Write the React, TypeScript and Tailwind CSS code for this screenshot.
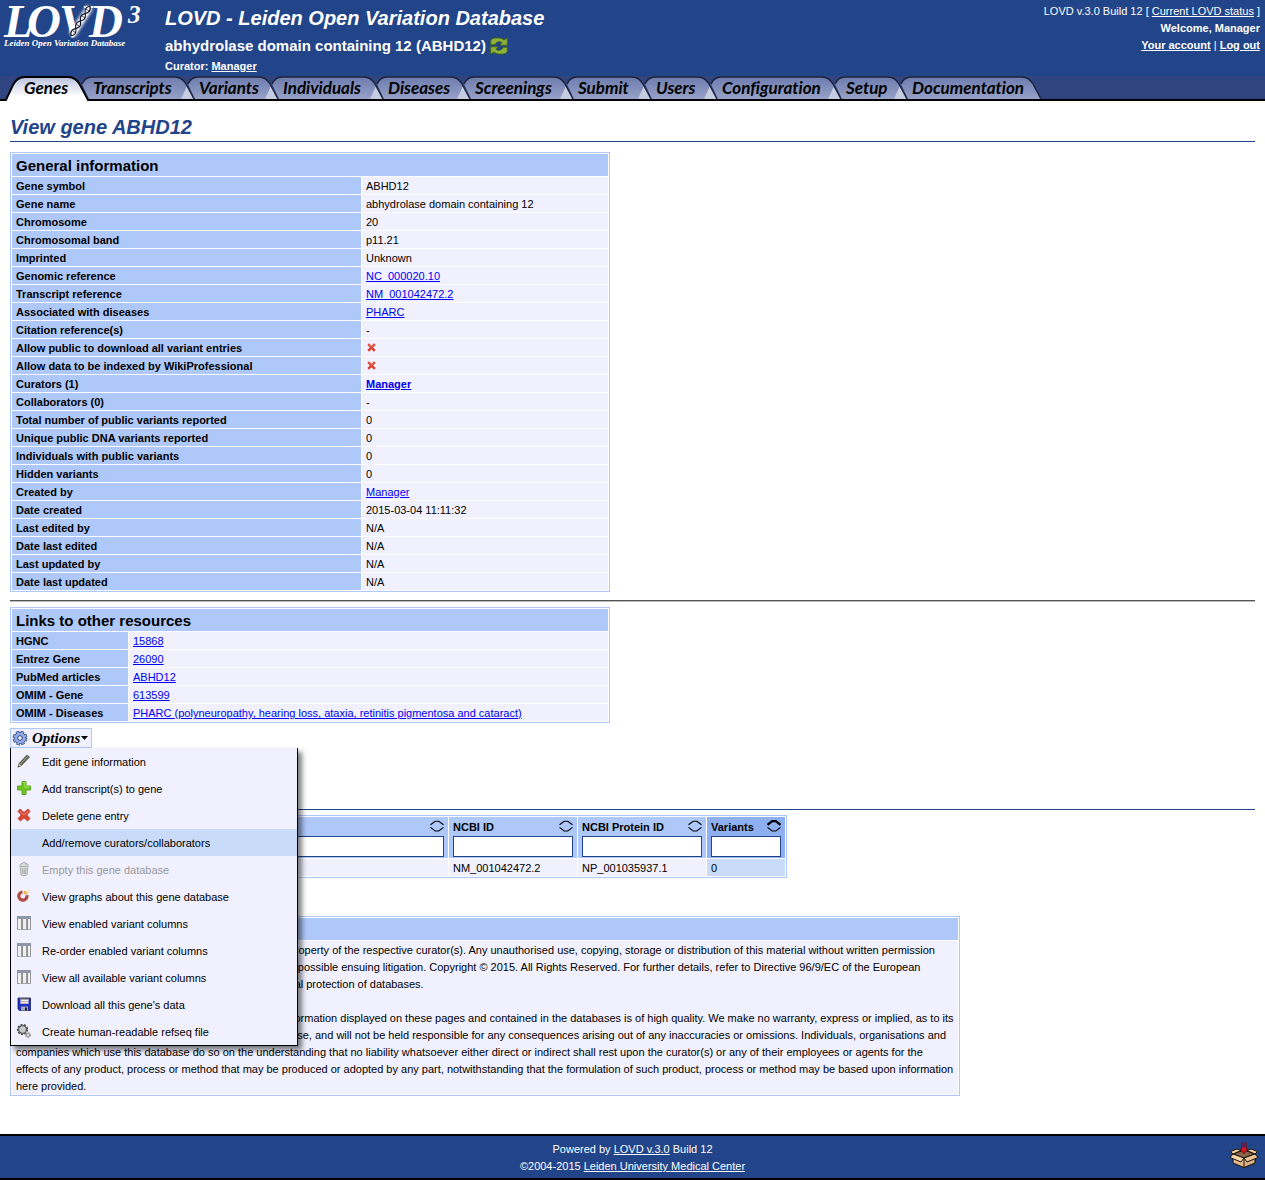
import React from "react";

type Row = { label: string; value: React.ReactNode };

const Link = ({ children, bold }: { children: React.ReactNode; bold?: boolean }) => (
  <a href="#" className={bold ? "font-bold text-[#0000ee] underline" : "text-[#0000ee] underline"}>
    {children}
  </a>
);

const HeaderLink = ({ children }: { children: React.ReactNode }) => (
  <a href="#" className="text-white underline">
    {children}
  </a>
);

const Cross = () => (
  <svg viewBox="0 0 9 9" className="mb-0.5 ml-px block size-[9px]" role="img" aria-label="No">
    <path d="M1.2 1.2 7.8 7.8M7.8 1.2 1.2 7.8" stroke="#d8402c" strokeWidth="2.4" />
    <path d="M1.6 1.2 4.5 4 7.4 1.2" stroke="#ea8078" strokeWidth="1" fill="none" />
  </svg>
);

const general: Row[] = [
  { label: "Gene symbol", value: "ABHD12" },
  { label: "Gene name", value: "abhydrolase domain containing 12" },
  { label: "Chromosome", value: "20" },
  { label: "Chromosomal band", value: "p11.21" },
  { label: "Imprinted", value: "Unknown" },
  { label: "Genomic reference", value: <Link>NC_000020.10</Link> },
  { label: "Transcript reference", value: <Link>NM_001042472.2</Link> },
  { label: "Associated with diseases", value: <Link>PHARC</Link> },
  { label: "Citation reference(s)", value: "-" },
  { label: "Allow public to download all variant entries", value: <Cross /> },
  { label: "Allow data to be indexed by WikiProfessional", value: <Cross /> },
  { label: "Curators (1)", value: <Link bold>Manager</Link> },
  { label: "Collaborators (0)", value: "-" },
  { label: "Total number of public variants reported", value: "0" },
  { label: "Unique public DNA variants reported", value: "0" },
  { label: "Individuals with public variants", value: "0" },
  { label: "Hidden variants", value: "0" },
  { label: "Created by", value: <Link>Manager</Link> },
  { label: "Date created", value: "2015-03-04 11:11:32" },
  { label: "Last edited by", value: "N/A" },
  { label: "Date last edited", value: "N/A" },
  { label: "Last updated by", value: "N/A" },
  { label: "Date last updated", value: "N/A" },
];

const resources: Row[] = [
  { label: "HGNC", value: <Link>15868</Link> },
  { label: "Entrez Gene", value: <Link>26090</Link> },
  { label: "PubMed articles", value: <Link>ABHD12</Link> },
  { label: "OMIM - Gene", value: <Link>613599</Link> },
  {
    label: "OMIM - Diseases",
    value: <Link>PHARC (polyneuropathy, hearing loss, ataxia, retinitis pigmentosa and cataract)</Link>,
  },
];

function InfoTable({ title, rows, labelWidth }: { title: string; rows: Row[]; labelWidth: string }) {
  return (
    <table className="w-[600px] max-w-full border-separate border-spacing-px border border-[#afc8fa]">
      <thead>
        <tr>
          <th colSpan={2} className="bg-[#afc8fa] px-1 pt-0.5 pb-0 text-left text-[15px] leading-5 font-bold">
            {title}
          </th>
        </tr>
      </thead>
      <tbody className="leading-[15px]">
        {rows.map((r) => (
          <tr key={r.label}>
            <th scope="row" className={"bg-[#afc8fa] px-1 pt-0.5 pb-0 text-left font-bold " + labelWidth}>
              {r.label}
            </th>
            <td className="bg-[#f0f0ff] px-1 pt-0.5 pb-0">{r.value}</td>
          </tr>
        ))}
      </tbody>
    </table>
  );
}

const tabs = [
  { name: "Transcripts", w: 106, cls: "w-[106px]" },
  { name: "Variants", w: 84, cls: "w-[84px]" },
  { name: "Individuals", w: 105, cls: "w-[105px]" },
  { name: "Diseases", w: 87, cls: "w-[87px]" },
  { name: "Screenings", w: 103, cls: "w-[103px]" },
  { name: "Submit", w: 78, cls: "w-[78px]" },
  { name: "Users", w: 66, cls: "w-[66px]" },
  { name: "Configuration", w: 124, cls: "w-[124px]" },
  { name: "Setup", w: 66, cls: "w-[66px]" },
  { name: "Documentation", w: 134, cls: "w-[134px]" },
];

function TabBar() {
  return (
    <nav className="flex h-[25px] border-b-2 border-black bg-[#304480] font-[Lato,sans-serif] text-[17px] leading-6 font-bold italic [font-variant-ligatures:none]">
      <a href="#" className="relative z-10 block w-[88px] pl-6 text-black">
        <svg className="absolute top-0 left-0 h-[25px] w-[90px] overflow-visible" viewBox="0 0 90 25" aria-hidden="true">
          <defs>
            <linearGradient id="activeTab" x1="0" y1="0" x2="0" y2="1">
              <stop offset="0" stopColor="#b9c0dd" />
              <stop offset="0.8" stopColor="#ffffff" />
            </linearGradient>
          </defs>
          <path d="M6 25 13 9Q17 1 25 1H68Q76 1 80 9L88 25Z" fill="url(#activeTab)" />
          <path d="M0 24H6L13 9Q17 1 25 1H68Q76 1 80 9L88 24H90" fill="none" stroke="#000" strokeWidth="1.8" />
        </svg>
        <span className="relative">Genes</span>
      </a>
      {tabs.map((t, i) => {
        const outline = `M-6 8Q-3 1 4 1H${t.w - 19}Q${t.w - 12} 1 ${t.w - 8} 8L${t.w} 23`;
        return (
          <a href="#" key={t.name} className={"relative block pl-[5px] text-black " + t.cls}>
            <svg
              className={"absolute top-0 left-0 h-[23px] overflow-visible " + t.cls}
              viewBox={`0 0 ${t.w} 23`}
              aria-hidden="true"
            >
              <defs>
                <linearGradient id="idleTab" x1="0" y1="0" x2="0" y2="1">
                  <stop offset="0" stopColor="#6d7cae" />
                  <stop offset="1" stopColor="#97a1c8" />
                </linearGradient>
              </defs>
              <path d={outline + "H1L-6 8Z"} fill="url(#idleTab)" />
              {i < tabs.length - 1 && <path d={`M${t.w - 13} 23 ${t.w - 7} 10 ${t.w} 23Z`} fill="#c6cce1" />}
              <path d={outline} fill="none" stroke="#1c2238" strokeWidth="1.4" />
            </svg>
            <span className="relative">{t.name}</span>
          </a>
        );
      })}
    </nav>
  );
}

/* Sine strand winding round the axis from (90,6) to (71,36). */
function strand(phase: number) {
  const points: string[] = [];
  for (let i = 0; i <= 40; i++) {
    const t = i / 40;
    const off = 2.2 * Math.sin(t * Math.PI * 4 + phase);
    points.push(`${(90 - 19 * t + off * 0.85).toFixed(1)},${(6 + 30 * t + off * 0.53).toFixed(1)}`);
  }
  return points.join(" ");
}

const Logo = () => (
  <svg viewBox="0 0 150 50" className="h-[50px] w-[150px] overflow-visible" role="img" aria-label="LOVD 3">
    <defs>
      <filter id="glow" x="-50%" y="-50%" width="200%" height="200%">
        <feGaussianBlur stdDeviation="1.5" />
      </filter>
    </defs>
    <g fill="#fff" fontFamily="'Liberation Serif', serif" fontStyle="italic" fontWeight="700" fontSize="47">
      <text x="4" y="37">L</text>
      <text x="27" y="37">O</text>
      <text x="59" y="37">V</text>
      <text x="89" y="37">D</text>
    </g>
    <path d="M90 7 72 35" stroke="#fff" strokeWidth="7" filter="url(#glow)" />
    <g fill="none" stroke="#10182c">
      <polyline points={strand(0)} strokeWidth="1.3" />
      <polyline points={strand(Math.PI)} strokeWidth="1.1" />
      <path d="M86 9l3 2M82 16l3 2M76 24l3 2M73 31l3 2" strokeWidth="0.8" />
    </g>
    <g fill="#fff" fontFamily="'Liberation Serif', serif" fontStyle="italic" fontWeight="700">
      <text x="128" y="23" fontSize="25">3</text>
      <text x="4" y="46" fontSize="9">Leiden Open Variation Database</text>
    </g>
  </svg>
);

const Refresh = () => (
  <svg viewBox="0 0 18 18" className="size-[18px]" role="img" aria-label="Switch gene">
    <g fill="#8fb03c" stroke="#3f6414" strokeWidth="0.9">
      <path d="M.7 7.800V3.500Q2 1 5 1H9.500Q12 1 14 3L17.300.8V8.200H9.800L12 5.600C9.500 3.800 6.500 4.500 4.800 7.800Z" />
      <path d="M17.300 10.200V14.500Q16 17 13 17H8.500Q6 17 4 15L.7 17.200V9.800H8.200L6 12.400C8.500 14.200 11.500 13.500 13.200 10.200Z" />
    </g>
  </svg>
);

const Gear = () => (
  <svg viewBox="0 0 16 16" className="size-4" aria-hidden="true">
    <circle cx="8" cy="8" r="6.200" fill="none" stroke="#33456f" strokeWidth="2.400" strokeDasharray="3.300 1.570" />
    <circle cx="8" cy="8" r="5.800" fill="#8faae8" stroke="#33456f" strokeWidth="0.8" />
    <circle cx="8" cy="8" r="6" fill="none" stroke="#8faae8" strokeWidth="1.500" strokeDasharray="2.100 2.612" strokeDashoffset="-0.600" />
    <circle cx="8" cy="8" r="2.300" fill="#f0f0ff" stroke="#33456f" strokeWidth="1" />
  </svg>
);

const PencilIcon = () => (
  <g>
    <path d="M2 14 3 10.500 11 2 13.500 4 5.500 12.500Z" fill="#5e6b57" stroke="#474c41" strokeWidth="0.7" />
    <path d="M4.500 11 12 3" stroke="#9aa58c" strokeWidth="1" />
    <path d="M2 14 3 10.500 5.500 12.500Z" fill="#c8b79c" />
    <path d="M1.800 14.200 2.500 12.400 3.600 13.400Z" fill="#333" />
  </g>
);
const PlusIcon = () => (
  <g>
    <path d="M6 1.500h4V6h4.500v4H10v4.500H6V10H1.500V6H6Z" fill="#6fc520" stroke="#5ba51c" strokeWidth="1" />
    <path d="M7 2.500h2V7h4.500" stroke="#a8e565" strokeWidth="1" fill="none" />
  </g>
);
const DeleteIcon = () => (
  <g>
    <path
      d="M4 2 8 5.500 12 2 14 4.500 10.800 8 14 11.500 11.500 14 8 10.800 4.500 14 2 11.500 5.200 8 2 4.500Z"
      fill="#dc4634"
      stroke="#b83322"
      strokeWidth="0.8"
    />
    <path d="M3.500 4.200 8 7.800 12.500 4.200" stroke="#f08a7e" strokeWidth="1" fill="none" />
  </g>
);
const BinIcon = () => (
  <g stroke="#a5a5a5" strokeWidth="0.9" fill="#dedede">
    <path d="M4 4.500 5 14Q8 15.500 11 14L12 4.500Z" />
    <ellipse cx="8" cy="4" rx="4.200" ry="1.600" />
    <path d="M6.300 7 6.800 13M8.200 7V13M10 7 9.500 13" />
    <path d="M6 3 7 1.500 9.500 1.800 10 3.500" />
  </g>
);
const GraphIcon = () => (
  <g fill="none">
    <path d="M10.900 7.200A4.100 4.100 0 1 1 6.500 4" stroke="#b14a42" strokeWidth="3.200" />
    <path d="M7.800 3.900A4.200 4.200 0 0 1 10.400 6" stroke="#e6b93c" strokeWidth="2.800" />
    <path d="M11 2 14.500 2.500M11 4 14 4.500" stroke="#eee2bb" strokeWidth="1" />
  </g>
);
const ColumnsIcon = () => (
  <g>
    <path d="M1 1H15V15H1Z" fill="#f0f0f4" />
    <path d="M1.500 3V15M5.500 3V15M10.500 3V15M14.500 3V15" stroke="#9a9a9a" strokeWidth="1" />
    <path d="M6.500 4V15M11.500 4V15" stroke="#77776f" strokeWidth="0.8" />
    <path d="M1 1H15V4H1Z" fill="#9096aa" />
    <path d="M1.500 14.500H4.500M7 14.500H10M12 14.500H15" stroke="#aaa" strokeWidth="1" />
  </g>
);
const DiskIcon = () => (
  <g>
    <path d="M2 2H14.500V14.500H3.500L2 13Z" fill="#2330c4" stroke="#151b62" strokeWidth="0.8" />
    <path d="M4.500 2H12.500V8H4.500Z" fill="#f3efef" />
    <path d="M4.500 2H12.500V3.500H4.500Z" fill="#555" />
    <path d="M5 5.500H12M5 7.500H12" stroke="#b99" strokeWidth="0.8" />
    <path d="M5 10.500H12V14.500H5Z" fill="#a8aab4" />
    <path d="M9 11.500H11V14.500H9Z" fill="#222" />
  </g>
);
const GearsIcon = () => (
  <g>
    <circle cx="6.500" cy="6.500" r="4.600" fill="none" stroke="#444" strokeWidth="2" strokeDasharray="2 1.210" />
    <circle cx="6.500" cy="6.500" r="3.900" fill="#c9c9c9" stroke="#5d5d5d" strokeWidth="1.200" />
    <circle cx="12" cy="12" r="2.200" fill="#aaa" stroke="#888" strokeWidth="1.300" strokeDasharray="1.300 1" />
    <circle cx="12" cy="12" r="0.900" fill="#eee" />
  </g>
);

const menu: { label: string; icon?: React.ReactNode; state?: "hover" | "disabled" }[] = [
  { label: "Edit gene information", icon: <PencilIcon /> },
  { label: "Add transcript(s) to gene", icon: <PlusIcon /> },
  { label: "Delete gene entry", icon: <DeleteIcon /> },
  { label: "Add/remove curators/collaborators", state: "hover" },
  { label: "Empty this gene database", icon: <BinIcon />, state: "disabled" },
  { label: "View graphs about this gene database", icon: <GraphIcon /> },
  { label: "View enabled variant columns", icon: <ColumnsIcon /> },
  { label: "Re-order enabled variant columns", icon: <ColumnsIcon /> },
  { label: "View all available variant columns", icon: <ColumnsIcon /> },
  { label: "Download all this gene's data", icon: <DiskIcon /> },
  { label: "Create human-readable refseq file", icon: <GearsIcon /> },
];

function OptionsMenu() {
  return (
    <div className="relative w-fit">
      <button className="flex h-5 w-[82px] items-center border border-[#afc8fa] bg-[#f0f0ff] pl-px font-['Liberation_Serif',serif] text-[15px] leading-[18px] font-bold italic">
        <Gear />
        <span className="ml-1">Options</span>
        <svg viewBox="0 0 7 4" className="ml-px h-1 w-[7px]" aria-hidden="true">
          <path d="M0 0H7L3.500 4Z" fill="#000" />
        </svg>
      </button>
      <ul className="absolute top-full left-0 z-20 w-[288px] border-x border-b border-black bg-[#f0f0ff] shadow-[4px_4px_5px_rgba(0,0,0,0.5)]">
        {menu.map((m) => (
          <li key={m.label}>
            <button
              disabled={m.state === "disabled"}
              className={
                "flex h-[27px] w-full items-center gap-2.5 pb-px pl-[5px] text-left " +
                (m.state === "hover" ? "bg-[#c8dcfa]" : m.state === "disabled" ? "text-[#999999]" : "")
              }
            >
              <svg viewBox="0 0 16 16" className="size-4 shrink-0" aria-hidden="true">
                {m.icon}
              </svg>
              <span className="pt-[3px]">{m.label}</span>
            </button>
          </li>
        ))}
      </ul>
    </div>
  );
}

const SortArrows = ({ active }: { active?: boolean }) => (
  <svg viewBox="0 0 14 12" className="mt-[3px] h-3 w-3.5" aria-hidden="true">
    <path d="M.5 4.800 5.200 1.200H8.800L13.500 4.800" fill="none" stroke="#000" strokeWidth={active ? 2.2 : 1.1} />
    <path d="M.5 7.400 5.200 11H8.800L13.500 7.400" fill="none" stroke="#000" strokeWidth="1.1" />
  </svg>
);

const columns = [
  { name: "ID", value: "00000001", cls: "w-[78px]" },
  { name: "Name", value: "transcript variant 1", cls: "w-[357px]" },
  { name: "NCBI ID", value: "NM_001042472.2", cls: "w-[128px]" },
  { name: "NCBI Protein ID", value: "NP_001035937.1", cls: "w-[128px]" },
  { name: "Variants", value: "0", cls: "w-[78px]", active: true },
];

function TranscriptTable() {
  return (
    <table className="w-[777px] table-fixed border-separate border-spacing-px border border-[#afc8fa]">
      <thead>
        <tr>
          {columns.map((c) => (
            <th
              key={c.name}
              scope="col"
              className={"px-1 pt-0 pb-px text-left font-bold " + c.cls + (c.active ? " bg-[#8fb0f0]" : " bg-[#afc8fa]")}
            >
              <label>
                <span className="flex h-[19px] items-start justify-between">
                  <span className="pt-0.5">{c.name}</span>
                  <SortArrows active={c.active} />
                </span>
                <input type="text" className="block h-[21px] w-full border border-[#224488] bg-white px-1 font-normal" />
              </label>
            </th>
          ))}
        </tr>
      </thead>
      <tbody className="leading-[15px]">
        <tr>
          {columns.map((c) => (
            <td key={c.name} className={"px-1 pt-0.5 pb-0 " + (c.active ? "bg-[#c8dcfa]" : "bg-[#f0f0ff]")}>
              {c.value}
            </td>
          ))}
        </tr>
      </tbody>
    </table>
  );
}

const BoxIcon = () => (
  <svg viewBox="0 0 30 28" className="h-7 w-[30px]" aria-hidden="true">
    <g stroke="#1a1410" strokeWidth="1" strokeLinejoin="round">
      <path d="M4 12 15 8 26 12V21L15 25.500 4 21Z" fill="#e2b888" />
      <path d="M4 12 15 8 26 12 15 16Z" fill="#8a6543" />
      <path d="M15 16V25.500L26 21V12Z" fill="#dcb080" />
      <path d="M4 12 15 16 12 20 1 15.500Z" fill="#f3d3a8" />
      <path d="M26 12 15 16 18 20 29 15.500Z" fill="#eac394" />
      <path d="M4 12 12 8.500 8 7 1.500 9.500Z" fill="#efcb9c" />
      <path d="M26 12 18 8.500 22 7 28.500 9.500Z" fill="#efcb9c" />
    </g>
    <path d="M12.500 1H17.500V7H19L15 12 11 7H12.500Z" fill="#d3151b" stroke="#5b1030" strokeWidth="0.8" />
    <path d="M12.500 1H17.500V5.500H12.500Z" fill="#5a2058" />
  </svg>
);

export default function App() {
  return (
    <div className="bg-white font-['Liberation_Sans',Arial,sans-serif] text-[11px] leading-[17px] text-black">
      <header className="flex h-[76px] items-start bg-[#224488] text-white">
        <div className="w-[165px] shrink-0">
          <Logo />
        </div>
        <div className="grow font-bold">
          <h1 className="text-[20px] leading-9 italic">LOVD - Leiden Open Variation Database</h1>
          <div className="flex h-5 items-center gap-1 text-[15px] leading-5">
            abhydrolase domain containing 12 (ABHD12)
            <a href="#">
              <Refresh />
            </a>
          </div>
          <div className="leading-5">
            Curator: <HeaderLink>Manager</HeaderLink>
          </div>
        </div>
        <div className="pt-[3px] pr-[5px] text-right">
          <div>
            LOVD v.3.0 Build 12 [ <HeaderLink>Current LOVD status</HeaderLink> ]
          </div>
          <div className="font-bold">Welcome, Manager</div>
          <div>
            <b>
              <HeaderLink>Your account</HeaderLink>
            </b>{" "}
            |{" "}
            <b>
              <HeaderLink>Log out</HeaderLink>
            </b>
          </div>
        </div>
      </header>
      <TabBar />
      <main className="px-2.5 pt-3">
        <h2 className="mb-2.5 border-b border-[#224488] text-[20px] leading-7 font-bold text-[#224488] italic">
          View gene ABHD12
        </h2>
        <InfoTable title="General information" rows={general} labelWidth="w-[349px]" />
        <hr className="mt-2 mb-[5px] h-0.5 border-t border-b border-t-[#555555] border-b-[#bbbbbb]" />
        <InfoTable title="Links to other resources" rows={resources} labelWidth="w-[116px]" />
        <div className="mt-[5px]">
          <OptionsMenu />
        </div>
        <hr className="mt-[61px] mb-[5px] border-[#224488]" />
        <TranscriptTable />
        <table className="my-[38px] w-[950px] max-w-full border-separate border-spacing-px border border-[#afc8fa]">
          <thead>
            <tr>
              <th className="bg-[#afc8fa] px-1 pt-0.5 pb-0 text-left text-[15px] leading-5 font-bold">
                Copyright &amp; disclaimer
              </th>
            </tr>
          </thead>
          <tbody>
            <tr>
              <td className="bg-[#f0f0ff] pt-px pr-0 pb-0 pl-1">
                <p className="mb-[17px]">
                  The contents of this LOVD database are the intellectual property of the respective curator(s). Any
                  unauthorised use, copying, storage or distribution of this material without written permission from
                  the curator(s) will lead to copyright infringement with possible ensuing litigation. Copyright © 2015.
                  All Rights Reserved. For further details, refer to Directive 96/9/EC of the European Parliament and
                  the Council of March 11 (1996) on the legal protection of databases.
                </p>
                <p className="-mb-px">
                  We have used all reasonable efforts to ensure that the information displayed on these pages and
                  contained in the databases is of high quality. We make no warranty, express or implied, as to its
                  accuracy or that the information is fit for a particular purpose, and will not be held responsible for
                  any consequences arising out of any inaccuracies or omissions. Individuals, organisations and
                  companies which use this database do so on the understanding that no liability whatsoever either
                  direct or indirect shall rest upon the curator(s) or any of their employees or agents for the effects
                  of any product, process or method that may be produced or adopted by any part, notwithstanding that
                  the formulation of such product, process or method may be based upon information here provided.
                </p>
              </td>
            </tr>
          </tbody>
        </table>
      </main>
      <footer className="relative border-y-2 border-black bg-[#224488] pt-[5px] pb-[3px] text-center text-white">
        <div>
          Powered by <HeaderLink>LOVD v.3.0</HeaderLink> Build 12
        </div>
        <div>
          ©2004-2015 <HeaderLink>Leiden University Medical Center</HeaderLink>
        </div>
        <a href="#" aria-label="Updates" className="absolute top-1.5 right-1.5">
          <BoxIcon />
        </a>
      </footer>
    </div>
  );
}
